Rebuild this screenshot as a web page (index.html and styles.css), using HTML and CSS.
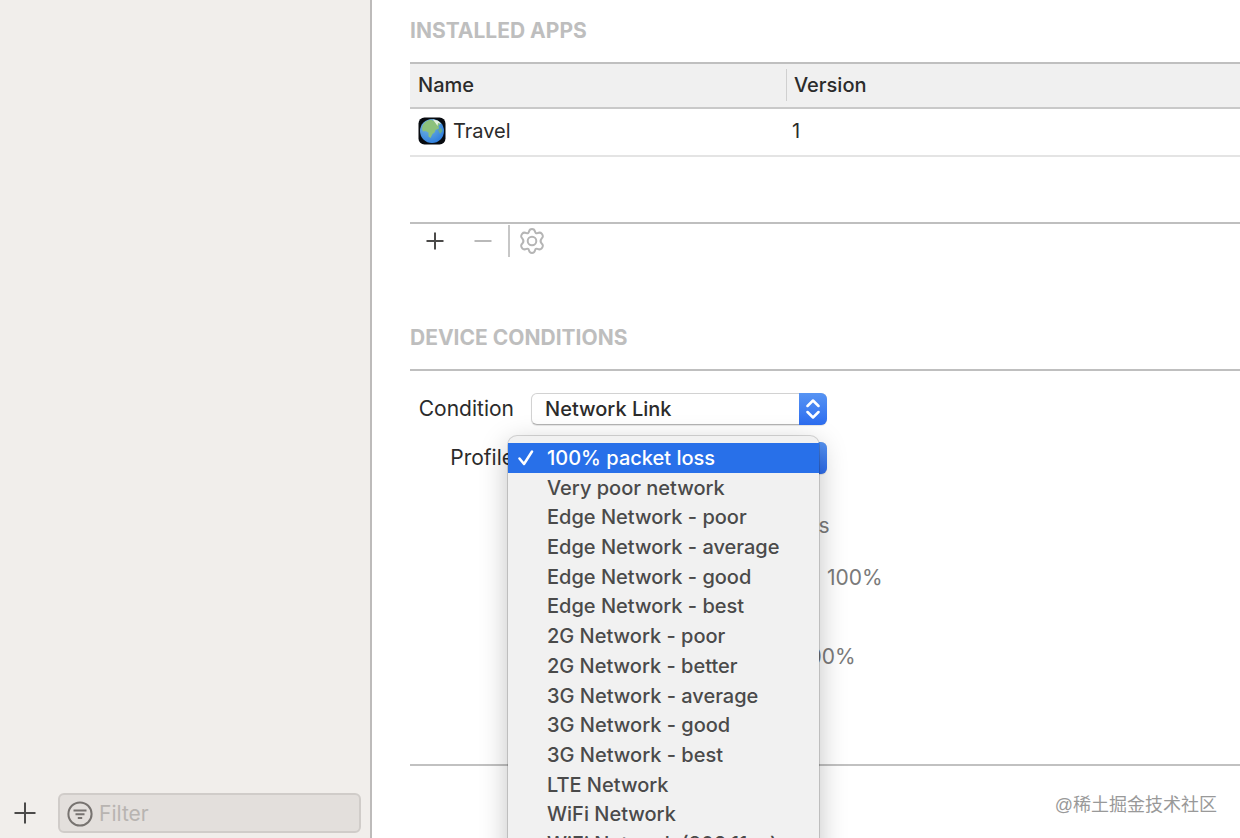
FILE: index.html
```html
<!DOCTYPE html>
<html lang="en">
<head>
<meta charset="utf-8">
<title>Devices</title>
<link rel="stylesheet" href="styles.css">
</head>
<body>
<div class="window">
  <aside class="sidebar">
    <div class="sidebar-footer">
      <button class="icon-button add-device" aria-label="Add device">
        <svg width="22" height="22" viewBox="0 0 22 22"><path d="M11 0.5V21.5M0.5 11H21.5"/></svg>
      </button>
      <label class="filter">
        <svg class="filter-icon" width="26" height="26" viewBox="0 0 26 26"><circle cx="13" cy="13" r="11.6"/><path d="M6.5 9.5H19.5M8.5 13.3H17.5M10.8 17.1H15.2"/></svg>
        <input class="filter-input" type="text" placeholder="Filter" aria-label="Filter">
      </label>
    </div>
  </aside>
  <main class="content">
    <section class="apps">
      <h2 class="section-title">INSTALLED APPS</h2>
      <table class="app-table">
        <thead><tr><th class="name-column">Name</th><th class="version-column">Version</th></tr></thead>
        <tbody><tr>
          <td><div class="app-name">
            <svg width="28" height="28" viewBox="0 0 28 28">
              <defs><radialGradient id="sea" cx="35%" cy="30%" r="75%"><stop offset="0" stop-color="#79b8dc"/><stop offset="1" stop-color="#2f7fdf"/></radialGradient></defs>
              <rect x="0.5" y="0.5" width="27" height="27" rx="6" fill="#080b10"/>
              <circle cx="14" cy="14" r="12" fill="url(#sea)"/>
              <path d="M4.5 9C6 5.5 9.5 3 13 2.8L16 4L19 3.5L22.5 7L20.5 8.5L21 11.5L17.5 13L16.5 15.5L14.5 17L12.5 21L10.5 19.5L10.5 15.5L7.5 14L5 14.5L4 12Z" fill="#8cc17b"/>
              <path d="M14.5 2.3L20 3.8L23.5 7L20 6L19.5 9L17.5 6Z" fill="#e5f1df"/>
              <path d="M20 13L23 11L24.5 14L22 17Z" fill="#67aa8e"/>
            </svg><span>Travel</span></div></td>
          <td>1</td>
        </tr></tbody>
      </table>
      <div class="app-actions">
        <button class="icon-button add-app" aria-label="Add app"><svg width="18" height="18" viewBox="0 0 18 18"><path d="M9 0.5V17.5M0.5 9H17.5"/></svg></button>
        <button class="icon-button remove-app" aria-label="Remove app"><svg width="18" height="18" viewBox="0 0 18 18"><path d="M0.5 9H17.5"/></svg></button>
        <button class="icon-button app-settings" aria-label="App settings"><svg width="28" height="28" viewBox="0 0 28 28"><circle cx="14" cy="14" r="4.3"/><path d="M11 4.6Q11.5 2 14 2T17 4.6Q17.5 6.7 19.5 6.1Q22.3 4.9 23.7 6.7Q26 9.6 23.7 11.4Q21.4 14 23.7 16.6Q26 18.4 23.7 21.3Q22.3 23.1 19.5 21.9Q17.5 21.3 17 23.4Q16.5 26 14 26T11 23.4Q10.5 21.3 8.5 21.9Q5.7 23.1 4.3 21.3Q2 18.4 4.3 16.6Q6.6 14 4.3 11.4Q2 9.6 4.3 6.7Q5.7 4.9 8.5 6.1Q10.5 6.7 11 4.6Z"/></svg></button>
      </div>
    </section>
    <section class="conditions">
      <h2 class="section-title">DEVICE CONDITIONS</h2>
      <div class="condition-form">
        <label class="field-label" for="condition">Condition</label>
        <div class="popup">
          <select id="condition" class="popup-select"><option>Network Link</option></select>
          <span class="popup-arrows"><svg width="14" height="20" viewBox="0 0 14 20"><path d="M1.5 7L7 1.5L12.5 7M1.5 13L7 18.5L12.5 13"/></svg></span>
        </div>
        <label class="field-label" for="profile">Profile</label>
        <div class="popup">
          <select id="profile" class="popup-select"><option>100% packet loss</option></select>
          <span class="popup-arrows"></span>
          <div class="menu" role="listbox" aria-label="Profile">
            <button class="menu-item selected" role="option" aria-selected="true"><svg class="check" width="16" height="16" viewBox="0 0 16 16"><path d="M1.5 8.5L6 14L14 1.5"/></svg>100% packet loss</button>
            <button class="menu-item" role="option">Very poor network</button>
            <button class="menu-item" role="option">Edge Network - poor</button>
            <button class="menu-item" role="option">Edge Network - average</button>
            <button class="menu-item" role="option">Edge Network - good</button>
            <button class="menu-item" role="option">Edge Network - best</button>
            <button class="menu-item" role="option">2G Network - poor</button>
            <button class="menu-item" role="option">2G Network - better</button>
            <button class="menu-item" role="option">3G Network - average</button>
            <button class="menu-item" role="option">3G Network - good</button>
            <button class="menu-item" role="option">3G Network - best</button>
            <button class="menu-item" role="option">LTE Network</button>
            <button class="menu-item" role="option">WiFi Network</button>
            <button class="menu-item" role="option">WiFi Network (802.11ac)</button>
          </div>
        </div>
      </div>
      <div class="details">
        <p class="detail latency">ms</p>
        <p class="detail downlink">100%</p>
        <p class="detail uplink">100%</p>
      </div>
    </section>
  </main>
  <div class="watermark" lang="zh">@稀土掘金技术社区</div>
</div>
</body>
</html>
```
FILE: styles.css
```css
* { box-sizing: border-box; }
body {
  margin: 0;
  overflow: hidden;
  background: #fff;
  color: #2b2b2b;
  font: 20px/24px Inter, "Liberation Sans", sans-serif;
}
button, input, select { font: inherit; color: inherit; }
svg { display: block; fill: none; }
.window { display: flex; height: 100vh; position: relative; }
.sidebar {
  flex: 0 0 30%;
  min-width: 0;
  display: flex;
  flex-direction: column;
  justify-content: flex-end;
  background: #f1eeeb;
  border-right: 2px solid #bdbbba;
}
.sidebar-footer { display: flex; align-items: center; gap: 22px; padding: 0 9px 5px 14px; }
.icon-button { padding: 0; border: 0; background: none; stroke: #4b4a49; stroke-width: 2; }
.filter {
  flex: 1;
  min-width: 0;
  display: flex;
  align-items: center;
  gap: 6px;
  height: 40px;
  padding: 2px 7px 0;
  background: #e3dfdc;
  border: 2px solid #d0ccc9;
  border-radius: 6px;
}
.filter-icon { flex: none; stroke: #777370; stroke-width: 2; }
.filter-input { flex: 1; min-width: 0; padding: 0; border: 0; outline: 0; background: none; font-size: 21px; }
.filter-input::placeholder { color: #b8b4b1; opacity: 1; }
.content { flex: 1; min-width: 0; padding: 19px 0 0 38px; }
.section-title {
  margin: 0;
  padding-bottom: 19px;
  border-bottom: 2px solid #bfbfbf;
  color: #bebebe;
  font-size: 21px;
  line-height: 24px;
  font-weight: 700;
}
.app-table { width: 100%; border-collapse: separate; border-spacing: 0; table-layout: fixed; }
.app-table th {
  height: 45px;
  padding: 0 8px 1px;
  background: #f0f0f0;
  border-bottom: 2px solid #c9c9c9;
  text-align: left;
  font-weight: 500;
}
.name-column { width: 376px; }
.app-table .version-column {
  background: linear-gradient(#d0d0d0, #d0d0d0) 0 5px / 1px 32px no-repeat #f0f0f0;
}
.app-table td { height: 48px; padding: 0 6px 2px; border-bottom: 2px solid #e4e4e4; }
.app-name { display: flex; align-items: center; gap: 7px; padding-left: 2px; }
.app-actions {
  display: flex;
  align-items: center;
  margin-top: 65px;
  padding-left: 16px;
  border-top: 2px solid #bfbfbf;
  height: 36px;
}
.remove-app { margin-left: 30px; stroke: #b9b9b9; }
.app-settings { margin-left: 16px; padding: 2px 8px; border-left: 2px solid #c7c7c7; stroke: #b5b5b5; }
.conditions { margin-top: 68px; border-bottom: 2px solid #c1c1c1; }
.condition-form {
  display: grid;
  grid-template-columns: 104px 296px;
  grid-auto-rows: 32px;
  align-items: center;
  gap: 17px;
  padding-top: 22px;
}
.field-label { text-align: right; font-size: 21px; }
.popup { position: relative; height: 32px; }
.popup-select {
  appearance: none;
  width: 100%;
  height: 32px;
  padding: 0 40px 0 13px;
  background: #fff;
  border: 1px solid #d2d2d2;
  border-bottom-color: #b4b4b4;
  border-radius: 6px;
  box-shadow: 0 1px 1px #0000001a;
  font-weight: 500;
}
.popup-arrows {
  position: absolute;
  top: 0;
  right: 0;
  display: grid;
  place-items: center;
  width: 28px;
  height: 32px;
  background: linear-gradient(#5794f3, #2d6df0);
  border-radius: 0 6px 6px 0;
  pointer-events: none;
}
.popup-arrows svg { stroke: #fff; stroke-width: 2.5; stroke-linecap: round; stroke-linejoin: round; }
.menu {
  position: absolute;
  z-index: 2;
  top: -6px;
  left: -23px;
  display: flex;
  flex-direction: column;
  width: 311px;
  height: 430px;
  padding: 7px 0;
  background: #f1f1f1;
  border-radius: 9px;
  box-shadow: 0 0 0 1px #00000026, 0 8px 28px #00000040;
}
.menu-item {
  flex: 1;
  display: flex;
  align-items: center;
  position: relative;
  min-height: 0;
  padding: 0 0 0 39px;
  border: 0;
  background: none;
  color: #4a4a4a;
  font-weight: 500;
}
.menu-item.selected { background: #2870e9; color: #fff; }
.check { position: absolute; left: 10px; stroke: #fff; stroke-width: 2.5; stroke-linecap: round; stroke-linejoin: round; }
.details { padding: 40px 0 95px 390px; color: #7a7a7a; font-size: 21px; }
.detail { margin: 0; }
.downlink { margin-top: 28px; padding-left: 27px; }
.uplink { margin-top: 55px; }
.watermark {
  position: absolute;
  right: 23px;
  bottom: 19px;
  color: #999;
  font: 18px/28px "Liberation Sans", "Noto Sans CJK SC", sans-serif;
}
```
